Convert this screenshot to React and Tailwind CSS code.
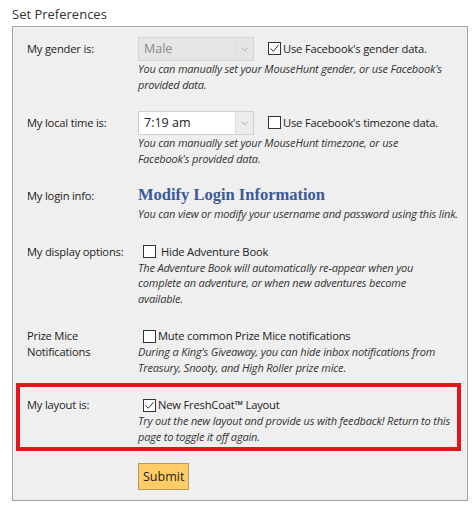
function Checkbox({ checked }) {
  return (
    <span className="inline-flex h-[13px] w-[13px] shrink-0 items-center justify-center border border-[#333] bg-white">
      {checked && (
        <svg width="11" height="11" viewBox="0 0 11 11" fill="none">
          <path d="M1.5 5.5 L4.3 8.3 L9.5 2.2" stroke="#333" strokeWidth="1" />
        </svg>
      )}
    </span>
  );
}

function Select({ value, disabled }) {
  return (
    <div
      className={`flex h-[24px] w-[116px] items-stretch border ${
        disabled ? "border-[#d6d6d6] bg-[#e5e5e5] text-[#8a8a8a]" : "border-[#d0d0d0] bg-white text-[#222]"
      }`}
    >
      <span className="flex-1 pl-[5px] text-[12.5px] leading-[22px]">{value}</span>
      <span
        className={`flex w-[18px] items-center justify-center border-l ${
          disabled ? "border-[#dcdcdc] bg-[#e5e5e5]" : "border-[#dcdcdc] bg-[#ececec]"
        }`}
      >
        <svg width="7" height="5" viewBox="0 0 7 5" fill="none">
          <path d="M0.5 0.8 L3.5 3.8 L6.5 0.8" stroke="#a8a8a8" strokeWidth="1" />
        </svg>
      </span>
    </div>
  );
}

function Desc({ children }) {
  return (
    <p className="whitespace-nowrap text-[11px] italic leading-[15.5px] tracking-[-0.18px] text-[#333]">
      {children}
    </p>
  );
}

function Row({ label, children, className = "" }) {
  return (
    <div className={`flex ${className}`}>
      <div className="w-[111px] shrink-0 text-[11.2px] leading-[16px] tracking-[-0.2px] text-[#222]">{label}</div>
      <div className="flex-1">{children}</div>
    </div>
  );
}

export default function App() {
  return (
    <div className="min-h-screen bg-white px-[12px] pt-[5px] font-['Open_Sans',sans-serif] text-[#222]">
      <h2 className="text-[13px] leading-[18px] text-[#333]">Set Preferences</h2>
      <div className="mt-[3px] w-[456px] border border-[#a3a3a3] bg-[#efefef] pb-[10px] pl-[14px] pt-[10px]">
        <Row label={<span className="block pt-[4px]">My gender is:</span>}>
          <div className="flex items-center">
            <Select value="Male" disabled />
            <span className="ml-[14px] flex items-center gap-[2px] text-[11.2px] tracking-[-0.2px]">
              <Checkbox checked />
              Use Facebook's gender data.
            </span>
          </div>
          <Desc>
            You can manually set your MouseHunt gender, or use Facebook's
            <br />
            provided data.
          </Desc>
        </Row>

        <Row label={<span className="block pt-[4px]">My local time is:</span>} className="mt-[19px]">
          <div className="flex items-center">
            <Select value="7:19 am" />
            <span className="ml-[14px] flex items-center gap-[2px] text-[11.2px] tracking-[-0.2px]">
              <Checkbox />
              Use Facebook's timezone data.
            </span>
          </div>
          <Desc>
            You can manually set your MouseHunt timezone, or use
            <br />
            Facebook's provided data.
          </Desc>
        </Row>

        <Row label={<span className="block pt-[4px]">My login info:</span>} className="mt-[18px]">
          <a className="block font-['Liberation_Serif',serif] text-[16.5px] font-bold leading-[22px] text-[#3b5998]">
            Modify Login Information
          </a>
          <Desc>You can view or modify your username and password using this link.</Desc>
        </Row>

        <Row label="My display options:" className="mt-[22px]">
          <div className="flex items-center gap-[5px] pl-[5px] text-[11.2px] leading-[16px] tracking-[-0.2px]">
            <Checkbox />
            Hide Adventure Book
          </div>
          <Desc>
            The Adventure Book will automatically re-appear when you
            <br />
            complete an adventure, or when new adventures become
            <br />
            available.
          </Desc>
        </Row>

        <Row
          label={
            <span className="block leading-[15.5px]">
              Prize Mice
              <br />
              Notifications
            </span>
          }
          className="mt-[22px]"
        >
          <div className="flex items-center gap-[2px] pl-[5px] text-[11.2px] leading-[16px] tracking-[-0.2px]">
            <Checkbox />
            Mute common Prize Mice notifications
          </div>
          <Desc>
            During a King's Giveaway, you can hide inbox notifications from
            <br />
            Treasury, Snooty, and High Roller prize mice.
          </Desc>
        </Row>

        <div className="-ml-[11px] mr-[6px] mt-[8px] border-[4px] border-[#e3141c] pb-[3px] pl-[7px] pt-[10px]">
          <Row label="My layout is:">
            <div className="flex items-center gap-[2px] pl-[5px] text-[11.2px] leading-[16px] tracking-[-0.2px]">
              <Checkbox checked />
              New FreshCoat™ Layout
            </div>
            <Desc>
              Try out the new layout and provide us with feedback! Return to this
              <br />
              page to toggle it off again.
            </Desc>
          </Row>
        </div>

        <div className="mt-[12px] pl-[111px]">
          <button className="h-[27px] border border-[#b59a5c] bg-[#ffcc66] px-[4px] text-[12.5px] leading-[25px] text-[#222]">
            Submit
          </button>
        </div>
      </div>
    </div>
  );
}
